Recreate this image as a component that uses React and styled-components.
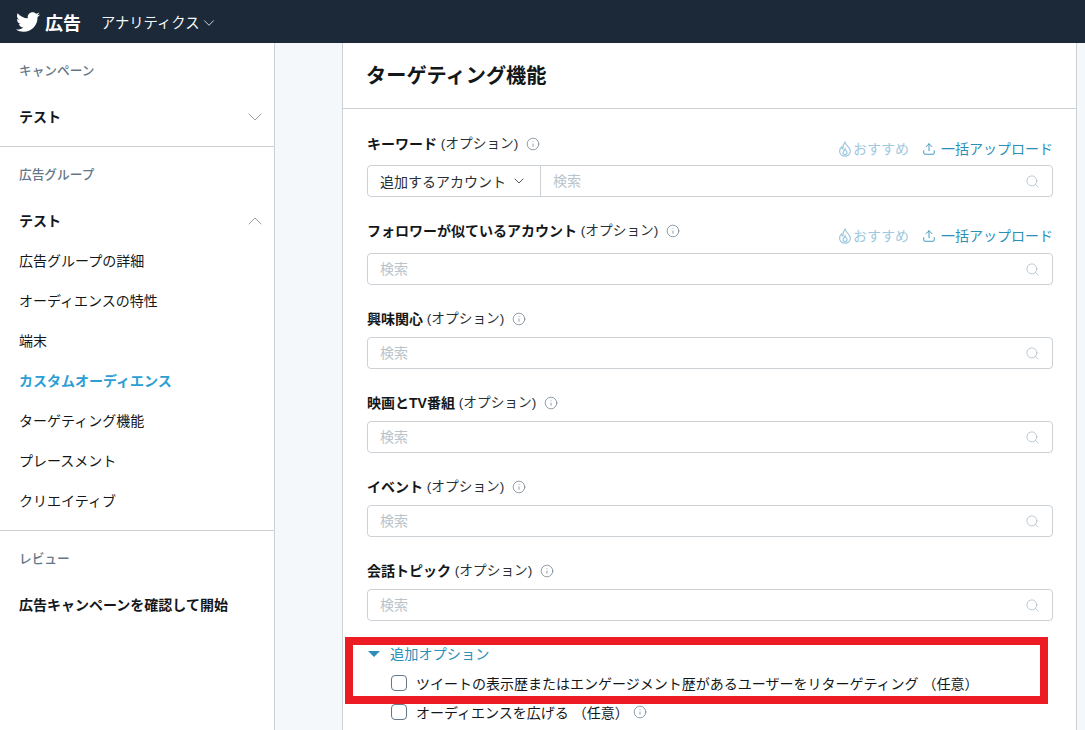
import styled, { createGlobalStyle } from "styled-components"
import { FaTwitter } from "react-icons/fa"
import { ChevronDown, ChevronUp, Info, Search, Upload } from "lucide-react"

const GlobalStyle = createGlobalStyle`
  html, body {
    margin: 0;
    height: 100%;
    overflow: hidden;
    background: #f5f8fa;
    font-family: "Liberation Sans", "Noto Sans CJK JP", sans-serif;
    color: #14171a;
  }
  * { box-sizing: border-box; }
`

const campaignLinks = [
  "広告グループの詳細",
  "オーディエンスの特性",
  "端末",
  "カスタムオーディエンス",
  "ターゲティング機能",
  "プレースメント",
  "クリエイティブ",
]

const fields = [
  { label: "キーワード", select: "追加するアカウント", actions: true, top: 24, gap: 12 },
  { label: "フォロワーが似ているアカウント", actions: true, top: 23, gap: 13 },
  { label: "興味関心", top: 23, gap: 9 },
  { label: "映画とTV番組", top: 23, gap: 9 },
  { label: "イベント", top: 23, gap: 9 },
  { label: "会話トピック", top: 23, gap: 9 },
]

function Flame() {
  return (
    <svg width="14" height="16" viewBox="0 0 14 16" fill="none" stroke="#9fc9e0" strokeWidth="1.2">
      <path d="M7 1.2C7.4 4 12.4 6.6 12.4 10.2a5.4 5 0 0 1-10.8 0C1.6 8.4 2.6 7 3.6 6c.2 1 .7 1.6 1.3 1.9C4.7 5.4 5.6 3 7 1.2Z" />
      <path d="M7 8c.3 1.2 2 2 2 3.6a2 2 0 0 1-4 0C5 10.2 6.5 9.4 7 8Z" />
    </svg>
  )
}

function Field({ field }) {
  return (
    <FieldBlock $top={field.top}>
      <LabelRow>
        <Label>
          <b>{field.label}</b> (オプション)
          <InfoIcon size={14} strokeWidth={1.2} />
        </Label>
        {field.actions && (
          <Actions>
            <Suggest>
              <Flame />
              おすすめ
            </Suggest>
            <BulkUpload>
              <Upload size={14} strokeWidth={1.5} />
              一括アップロード
            </BulkUpload>
          </Actions>
        )}
      </LabelRow>
      <SearchBox $gap={field.gap}>
        {field.select && (
          <SelectPart>
            {field.select}
            <ChevronDown size={16} strokeWidth={1.2} />
          </SelectPart>
        )}
        <Placeholder>検索</Placeholder>
        <Search size={15} strokeWidth={1.2} color="#aab8c2" />
      </SearchBox>
    </FieldBlock>
  )
}

export default function App() {
  return (
    <>
      <GlobalStyle />
      <TopBar>
        <Brand>
          <FaTwitter size={24} color="#fff" />
          広告
        </Brand>
        <TopMenu>
          アナリティクス
          <ChevronDown size={18} strokeWidth={1.1} />
        </TopMenu>
      </TopBar>
      <Page>
        <Sidebar>
          <SideSection $height={104}>
            <SideCaption>キャンペーン</SideCaption>
            <SideTitle>
              テスト
              <ChevronDown size={24} strokeWidth={0.7} color="#657786" />
            </SideTitle>
          </SideSection>
          <SideSection $height={384}>
            <SideCaption>広告グループ</SideCaption>
            <SideTitle>
              テスト
              <ChevronUp size={24} strokeWidth={0.7} color="#657786" />
            </SideTitle>
            {campaignLinks.map((link) => (
              <SideLink key={link} $active={link === "カスタムオーディエンス"}>
                {link}
              </SideLink>
            ))}
          </SideSection>
          <SideSection>
            <SideCaption>レビュー</SideCaption>
            <SideTitle>広告キャンペーンを確認して開始</SideTitle>
          </SideSection>
        </Sidebar>
        <Panel>
          <PanelTitle>ターゲティング機能</PanelTitle>
          <PanelBody>
            {fields.map((field) => (
              <Field key={field.label} field={field} />
            ))}
            <MoreOptions>
              <Caret />
              追加オプション
            </MoreOptions>
            <CheckRow>
              <CheckBox />
              ツイートの表示歴またはエンゲージメント歴があるユーザーをリターゲティング （任意）
            </CheckRow>
            <CheckRow>
              <CheckBox />
              オーディエンスを広げる （任意）
              <CheckInfo size={14} strokeWidth={1.2} />
            </CheckRow>
          </PanelBody>
          <Highlight />
        </Panel>
      </Page>
    </>
  )
}

const TopBar = styled.header`
  height: 43px;
  background: #1c2938;
  display: flex;
  align-items: center;
  padding-left: 16px;
  color: #fff;
`

const Brand = styled.div`
  display: flex;
  align-items: center;
  gap: 5px;
  font-size: 18px;
  font-weight: 700;
  width: 85px;
`

const TopMenu = styled.div`
  display: flex;
  align-items: center;
  font-size: 14.3px;
  color: #f5f8fa;
  svg { margin-top: 3px; }
`

const Page = styled.div`
  display: flex;
  height: 687px;
  overflow: hidden;
`

const Sidebar = styled.aside`
  width: 275px;
  flex: none;
  background: #fff;
  border-right: 1px solid #ccd1d6;
`

const SideSection = styled.section`
  height: ${(p) => (p.$height ? `${p.$height}px` : "auto")};
  border-bottom: ${(p) => (p.$height ? "1px solid #ccd1d6" : "none")};
  padding: 19px 7px 0 19px;
`

const SideCaption = styled.div`
  font-size: 12.7px;
  line-height: 18px;
  color: #657786;
  font-weight: 500;
`

const SideTitle = styled.div`
  display: flex;
  align-items: center;
  justify-content: space-between;
  height: 20px;
  font-size: 14px;
  font-weight: 700;
  line-height: 20px;
  margin-top: 27px;
`

const SideLink = styled.div`
  font-size: 14px;
  line-height: 20px;
  margin-top: 20px;
  font-weight: ${(p) => (p.$active ? 700 : 400)};
  color: ${(p) => (p.$active ? "#2b9ed4" : "#14171a")};
`

const Panel = styled.main`
  position: relative;
  width: 735px;
  margin-left: 67px;
  flex: none;
  background: #fff;
  border-left: 1px solid #ccd1d6;
  border-right: 1px solid #ccd1d6;
`

const PanelTitle = styled.h2`
  margin: 0;
  height: 66px;
  padding: 19px 0 0 23px;
  font-size: 20.2px;
  line-height: 28px;
  font-weight: 700;
  border-bottom: 1px solid #ccd1d6;
`

const PanelBody = styled.div`
  padding: 0 23px 0 24px;
`

const FieldBlock = styled.div`
  padding-top: ${(p) => p.$top}px;
`

const LabelRow = styled.div`
  display: flex;
  justify-content: space-between;
  align-items: flex-end;
  height: 20px;
`

const Label = styled.div`
  display: flex;
  align-items: center;
  margin-bottom: -1px;
  font-size: 13.7px;
  line-height: 20px;
  color: #292f33;
  white-space: pre;
  b { font-size: 14px; color: #14171a; }
`

const InfoIcon = styled(Info)`
  margin-left: 8px;
  color: #657786;
`

const CheckInfo = styled(InfoIcon)`
  margin-left: -5px;
`

const Actions = styled.div`
  display: flex;
  gap: 13px;
  font-size: 14px;
  line-height: 20px;
  margin-bottom: -6px;
`

const Suggest = styled.span`
  display: flex;
  align-items: center;
  gap: 1px;
  color: #9fc9e0;
`

const BulkUpload = styled.span`
  display: flex;
  align-items: center;
  gap: 5px;
  color: #2b8fb8;
`

const SearchBox = styled.div`
  display: flex;
  align-items: center;
  height: 32px;
  margin-top: ${(p) => p.$gap}px;
  padding-right: 12px;
  border: 1px solid #ccd1d6;
  border-radius: 4px;
`

const SelectPart = styled.div`
  display: flex;
  align-items: center;
  gap: 5px;
  height: 100%;
  padding: 0 13px 0 12px;
  font-size: 14px;
  color: #292f33;
  border-right: 1px solid #ccd1d6;
`

const Placeholder = styled.span`
  flex: 1;
  padding-left: 12px;
  font-size: 14px;
  line-height: 28px;
  color: #b8c4cc;
`

const MoreOptions = styled.div`
  display: flex;
  align-items: center;
  gap: 10px;
  margin-top: 23px;
  font-size: 14.2px;
  line-height: 20px;
  color: #2b8fb8;
`

const Caret = styled.span`
  width: 0;
  height: 0;
  margin-left: 1px;
  border-left: 6px solid transparent;
  border-right: 6px solid transparent;
  border-top: 6px solid #2b8fb8;
`

const CheckRow = styled.label`
  display: flex;
  align-items: center;
  gap: 9px;
  height: 29px;
  padding-left: 24px;
  font-size: 14px;
  color: #14171a;
  white-space: pre;
  ${MoreOptions} + & { margin-top: 4px; }
`

const CheckBox = styled.span`
  width: 16px;
  height: 16px;
  flex: none;
  background: #fff;
  border: 1px solid #657786;
  border-radius: 4px;
`

const Highlight = styled.div`
  position: absolute;
  left: 2px;
  top: 594px;
  width: 703px;
  height: 67px;
  border: 8px solid #ed1c24;
  pointer-events: none;
`
